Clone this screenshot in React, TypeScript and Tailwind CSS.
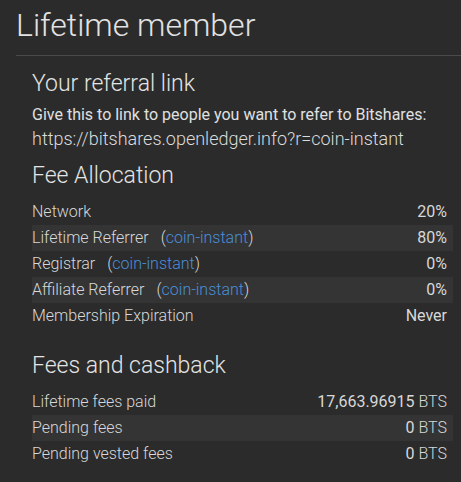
const rows1 = [
  { label: "Network", link: null, value: "20%" },
  { label: "Lifetime Referrer", link: "coin-instant", value: "80%" },
  { label: "Registrar", link: "coin-instant", value: "0%" },
  { label: "Affiliate Referrer", link: "coin-instant", value: "0%" },
];

const fees = [
  { label: "Lifetime fees paid", amount: "17,663.96915" },
  { label: "Pending fees", amount: "0" },
  { label: "Pending vested fees", amount: "0" },
];

function Row({ striped, children }: { striped: boolean; children: React.ReactNode }) {
  return (
    <div
      className={`flex items-center justify-between h-[26px] pr-[6px] leading-[26px] ${
        striped ? "bg-[#343434]" : ""
      }`}
    >
      {children}
    </div>
  );
}

export default function App() {
  return (
    <div
      className="w-[461px] h-[482px] overflow-hidden bg-[#2b2b2b] text-[#d8d8d8]"
      style={{ fontFamily: "Roboto, 'Open Sans', sans-serif" }}
    >
      {/* Title */}
      <div className="ml-4 pt-[6px] pb-[11px] border-b border-[#4a4a4a]">
        <h1 className="text-[32px] leading-[38px] font-light text-[#e2e2e2]">
          Lifetime member
        </h1>
      </div>

      <div className="pl-8 pr-2">
        {/* Referral link */}
        <h2 className="mt-[15px] text-[23px] leading-[26px] font-light text-[#e4e4e4]">
          Your referral link
        </h2>
        <p className="mt-[6px] text-[16px] leading-6 font-normal text-[#e0e0e0]">
          Give this to link to people you want to refer to Bitshares:
        </p>
        <p className="text-[18px] leading-6 font-light text-[#dcdcdc]">
          https://bitshares.openledger.info?r=coin-instant
        </p>

        {/* Fee allocation */}
        <h2 className="mt-[12px] text-[23px] leading-[26px] font-light text-[#e4e4e4]">
          Fee Allocation
        </h2>
        <div className="mt-[10px] text-[16px] font-light">
          {rows1.map((r, i) => (
            <Row key={r.label} striped={i % 2 === 1}>
              <span>
                {r.label}
                {r.link && (
                  <span className="ml-3">
                    (<span className="text-[#4a8fd8]">{r.link}</span>)
                  </span>
                )}
              </span>
              <span className="font-normal">{r.value}</span>
            </Row>
          ))}
          <Row striped={false}>
            <span>Membership Expiration</span>
            <span className="font-normal">Never</span>
          </Row>
        </div>

        {/* Fees and cashback */}
        <h2 className="mt-[24px] text-[23px] leading-[26px] font-light text-[#e4e4e4]">
          Fees and cashback
        </h2>
        <div className="mt-[10px] text-[16px] font-light">
          {fees.map((f, i) => (
            <Row key={f.label} striped={i % 2 === 1}>
              <span>{f.label}</span>
              <span>
                <span className="font-normal">{f.amount}</span> BTS
              </span>
            </Row>
          ))}
        </div>
      </div>
    </div>
  );
}
